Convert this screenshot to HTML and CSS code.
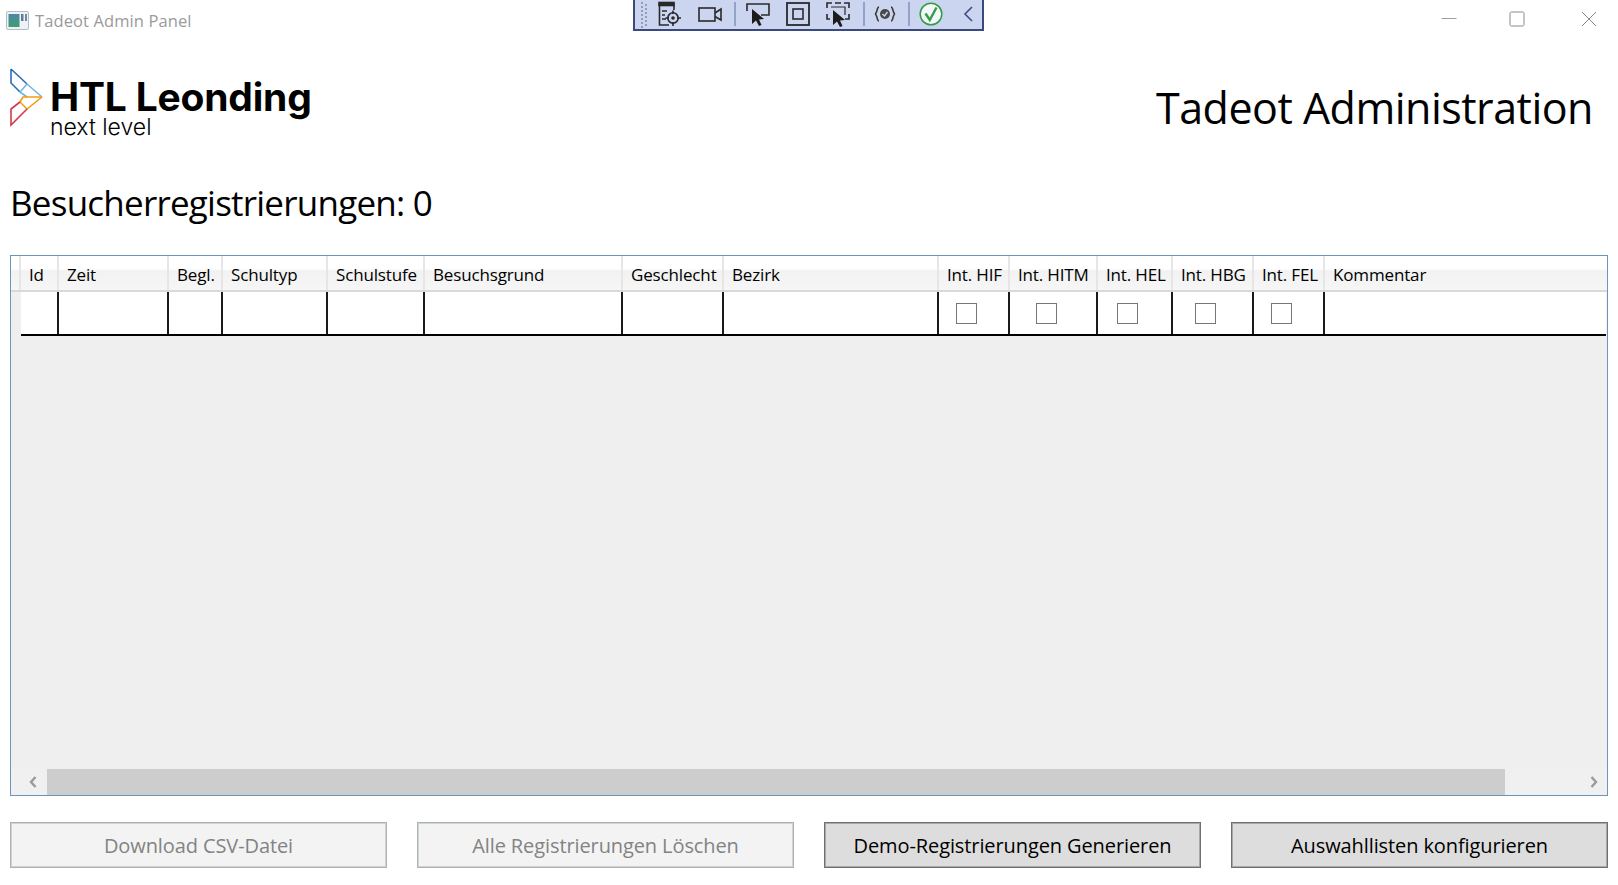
FILE: index.html
```html
<!DOCTYPE html>
<html lang="de">
<head>
<meta charset="utf-8">
<title>Tadeot Admin Panel</title>
<link rel="stylesheet" href="styles.css">
</head>
<body>
<div class="window">
  <div class="titlebar">
    <svg class="app-icon" width="23" height="19" viewBox="0 0 23 19">
      <defs><linearGradient id="ai" x1="0" y1="0" x2="0" y2="1"><stop offset="0" stop-color="#4f86a6"/><stop offset="1" stop-color="#3f9d72"/></linearGradient></defs>
      <rect x="0.5" y="0.5" width="22" height="18" rx="1.5" fill="#eef2f6" stroke="#b4bcc6"/>
      <rect x="2.5" y="3" width="11" height="13" fill="url(#ai)"/>
      <rect x="15" y="3" width="2.5" height="7" fill="#5f7f90"/>
      <rect x="19" y="3" width="2" height="7" fill="#6d8c9d"/>
    </svg>
    <span class="app-title">Tadeot Admin Panel</span>
    <div class="win-controls">
      <svg width="16" height="16" viewBox="0 0 16 16"><path d="M0.5 7.5H15.5" stroke="#a0a0a0" fill="none"/></svg>
      <svg width="16" height="16" viewBox="0 0 16 16"><rect x="1" y="1" width="14" height="14" rx="1.5" stroke="#8a8a8a" fill="none"/></svg>
      <svg width="16" height="16" viewBox="0 0 16 16"><path d="M1 1L15 15M15 1L1 15" stroke="#8a8a8a" fill="none"/></svg>
    </div>
  </div>

  <div class="debug-bar">
    <svg class="grip" width="8" height="26" viewBox="0 0 8 26"><path d="M1 1h2M5 3h2M1 5h2M5 7h2M1 9h2M5 11h2M1 13h2M5 15h2M1 17h2M5 19h2M1 21h2M5 23h2M1 25h2" stroke="#7f89a8" stroke-width="1.4"/></svg>
    <svg class="tool t1" width="24" height="26" viewBox="0 0 24 26" fill="none" stroke="#2a2a2a" stroke-width="1.6"><path d="M11 24H1.5V3H16V9" /><rect x="1" y="1.5" width="15" height="3" fill="#2a2a2a"/><path d="M4 10h5M4 14h3M4 18h4"/><circle cx="15" cy="17" r="5.2"/><path d="M15 9.5V13M15 21V25M7.5 17H11M19 17H23"/><circle cx="15" cy="17" r="1" fill="#2a2a2a"/></svg>
    <svg class="tool t2" width="24" height="26" viewBox="0 0 24 26" fill="none" stroke="#2a2a2a" stroke-width="1.6"><rect x="1" y="7" width="16" height="13"/><path d="M17 12L23 8V19L17 15.5"/></svg>
    <i class="sep s1"></i>
    <svg class="tool t3" width="24" height="26" viewBox="0 0 24 26" fill="none" stroke="#2a2a2a" stroke-width="1.6"><path d="M1 10V3H23V14H15"/><path d="M6 8L6 23L10 19.500L13 25L15.500 24L13 18.500L18 18Z" fill="#1c1c1c" stroke="none"/></svg>
    <svg class="tool t4" width="24" height="26" viewBox="0 0 24 26" fill="none" stroke="#2a2a2a"><rect x="1" y="2" width="22" height="22" stroke-width="1.8"/><rect x="7" y="8" width="10" height="10" stroke-width="1.6"/></svg>
    <svg class="tool t5" width="24" height="26" viewBox="0 0 24 26" fill="none" stroke="#2a2a2a" stroke-width="1.6"><path d="M1 7V2H6M18 2H23V7M1 13V18H4M23 13V18H19M9 2H15"/><path d="M5 6H19V14" stroke-width="1.2"/><path d="M7 9L7 24L11 20.500L14 26L16.500 25L14 19.500L19 19Z" fill="#1c1c1c" stroke="none"/></svg>
    <i class="sep s2"></i>
    <svg class="tool t6" width="22" height="26" viewBox="0 0 22 26" fill="none" stroke="#3a3a3a" stroke-width="1.6"><path d="M5 6C2.500 6 3.500 12.500 1 13C3.500 13.500 2.500 20 5 20M17 6C19.500 6 18.500 12.500 21 13C18.500 13.500 19.500 20 17 20"/><circle cx="11" cy="13" r="5" fill="#4a4a4a" stroke="none"/><path d="M8.500 13L10.500 15L13.500 11" stroke="#ccd5f0" stroke-width="1.4"/></svg>
    <i class="sep s3"></i>
    <svg class="tool t7" width="24" height="26" viewBox="0 0 24 26" fill="none"><circle cx="12" cy="13" r="10.800" stroke="#2f9e44" stroke-width="1.500" fill="#f4f7fb"/><path d="M6.500 12.500L10.800 19L17.500 6.500" stroke="#2f9e44" stroke-width="2.400"/></svg>
    <svg class="tool t8" width="10" height="26" viewBox="0 0 10 26" fill="none"><path d="M9 6L2 13L9 20" stroke="#3d4f80" stroke-width="1.600"/></svg>
  </div>

  <header class="page-header">
    <div class="logo">
      <svg class="logo-mark" width="36" height="62" viewBox="8 66 36 62" fill="none" stroke-width="1.600">
        <path d="M11 69L27 84M11 69V83L20 92" stroke="#2a6fb5"/>
        <path d="M27 84L42 97M27 84L20 92L27 97" stroke="#74b7e0"/>
        <path d="M42 97H23L20 102L27 109L42 97" stroke="#f39c12"/>
        <path d="M20 102L11 109V125L27 109" stroke="#d4384a"/>
      </svg>
      <div class="logo-text">
        <div class="logo-name">HTL Leonding</div>
        <div class="logo-sub">next level</div>
      </div>
    </div>
    <h1 class="app-heading">Tadeot Administration</h1>
  </header>

  <h2 class="count">Besucherregistrierungen: 0</h2>

  <div class="grid">
    <div class="rows">
      <div class="row head">
        <div>Id</div><div>Zeit</div><div>Begl.</div><div>Schultyp</div><div>Schulstufe</div><div>Besuchsgrund</div><div>Geschlecht</div><div>Bezirk</div><div>Int. HIF</div><div>Int. HITM</div><div>Int. HEL</div><div>Int. HBG</div><div>Int. FEL</div><div>Kommentar</div>
      </div>
      <div class="row body">
        <div></div><div></div><div></div><div></div><div></div><div></div><div></div><div></div>
        <div><span class="check"></span></div><div><span class="check"></span></div><div><span class="check"></span></div><div><span class="check"></span></div><div><span class="check"></span></div><div></div>
      </div>
    </div>
    <div class="scrollbar">
      <div class="arrow"><svg width="8" height="12" viewBox="0 0 8 12"><path d="M6.500 1L2 6L6.500 11" fill="none" stroke="#9a9a9a" stroke-width="2.400"/></svg></div>
      <div class="thumb"></div>
      <div class="arrow right"><svg width="8" height="12" viewBox="0 0 8 12"><path d="M1.500 1L6 6L1.500 11" fill="none" stroke="#9a9a9a" stroke-width="2.400"/></svg></div>
    </div>
  </div>

  <div class="actions">
    <button class="btn" disabled>Download CSV-Datei</button>
    <button class="btn" disabled>Alle Registrierungen Löschen</button>
    <button class="btn">Demo-Registrierungen Generieren</button>
    <button class="btn">Auswahllisten konfigurieren</button>
  </div>
</div>
</body>
</html>
```
FILE: styles.css
```css
* { box-sizing: border-box; }
html, body { margin: 0; padding: 0; }
body { background: #fff; font-family: "Open Sans", "Noto Sans", sans-serif; color: #000; overflow: hidden; }
.window { width: 1618px; height: 885px; display: flex; flex-direction: column; padding: 0 10px; position: relative; }

.titlebar { height: 40px; flex: none; display: flex; align-items: center; margin: 0 0 0 -4px; }
.app-icon { flex: none; }
.app-title { margin-left: 6px; font-size: 16.5px; letter-spacing: 0.1px; color: #9a9a9a; }
.win-controls { margin-left: auto; display: flex; gap: 54px; margin-right: 11px; position: relative; top: -1px; }
.win-controls svg:nth-child(2) { margin: 0 2px 0 -2px; }

.debug-bar { position: absolute; left: 633px; top: 0; width: 351px; height: 31px; background: #ccd5f0; border: 2px solid #3a4a7e; border-top: 0; display: flex; align-items: center; }
.grip { margin-left: 5px; }
.tool { margin-top: -1px; flex: none; }
.t1 { margin-left: 10px; }
.t2 { margin-left: 16px; }
.sep { width: 2px; height: 24px; background: #93a2c6; flex: none; margin-top: -1px; }
.s1 { margin-left: 12px; }
.t3 { margin-left: 10px; }
.t4, .t5 { margin-left: 16px; }
.s2 { margin-left: 13px; }
.t6 { margin-left: 9px; }
.s3 { margin-left: 12px; }
.t7 { margin-left: 9px; }
.t8 { margin-left: 20px; }

.page-header { flex: none; height: 100px; display: flex; justify-content: space-between; align-items: flex-start; }
.logo { display: flex; align-items: flex-start; margin-top: 26px; margin-left: -2px; }
.logo-mark { flex: none; }
.logo-text { margin-left: 6px; font-family: Inter, sans-serif; color: #000; }
.logo-name { font-size: 39px; font-weight: 700; line-height: 36px; margin-top: 13px; letter-spacing: -0.2px; }
.logo-sub { font-size: 23px; line-height: 22px; margin-top: 1px; font-weight: 300; }
.app-heading { margin: 36px 15px 0 0; font-size: 43px; line-height: 64px; font-weight: 400; letter-spacing: -0.5px; }

.count { flex: none; margin: 39px 0 0; font-size: 35px; line-height: 48px; font-weight: 400; letter-spacing: -0.77px; height: 48px; }

.grid { flex: none; margin-top: 28px; height: 541px; border: 1px solid #6d93bf; background: #efefef; display: flex; flex-direction: column; justify-content: space-between; }
.rows { padding-left: 10px; }
.row { display: grid; grid-template-columns: 38px 110px 54px 105px 97px 198px 101px 215px 71px 88px 75px 81px 71px 1fr; }
.head { height: 36px; background: linear-gradient(#ffffff 0, #ffffff 38%, #f2f2f2 44%, #f6f6f6 100%); border-bottom: 2px solid #d9d9d9; margin-left: -10px; padding-left: 10px; font-size: 17px; letter-spacing: -0.15px; }
.head > div { padding: 8px 0 0 8px; border-right: 2px solid #e6e6e6; white-space: nowrap; line-height: 22px; overflow: hidden; }
.head > div:first-child { box-shadow: -2px 0 0 #e6e6e6; }
.head > div:last-child { border-right: 0; }
.body { height: 44px; background: #fff; border-bottom: 2px solid #000; margin-right: 1px; }
.body > div { border-right: 2px solid #1a1a1a; display: flex; align-items: center; justify-content: center; padding-right: 14px; }
.body > div:last-child { border-right: 0; }
.check { width: 21px; height: 21px; border: 1px solid #767676; background: #fff; display: block; }

.scrollbar { height: 26px; flex: none; display: flex; background: #f0f0f0; }
.arrow { width: 36px; flex: none; display: flex; align-items: center; justify-content: center; padding-left: 8px; }
.arrow.right { width: 102px; justify-content: flex-end; padding: 0 9px 0 0; }
.thumb { flex: 1; background: #cdcdcd; }

.actions { flex: none; margin-top: 26px; display: grid; grid-template-columns: repeat(4, 377px); column-gap: 30px; }
.btn { height: 46px; font: inherit; font-size: 20px; letter-spacing: -0.1px; color: #000; background: #dddddd; border: 1px solid #707070; box-shadow: inset 0 0 0 1px #a8a8a8; padding: 1px 0 0; }
.btn:disabled { background: #f3f3f3; border-color: #adb2b5; box-shadow: inset 0 0 0 1px #d0d3d5; color: #838383; }
```
